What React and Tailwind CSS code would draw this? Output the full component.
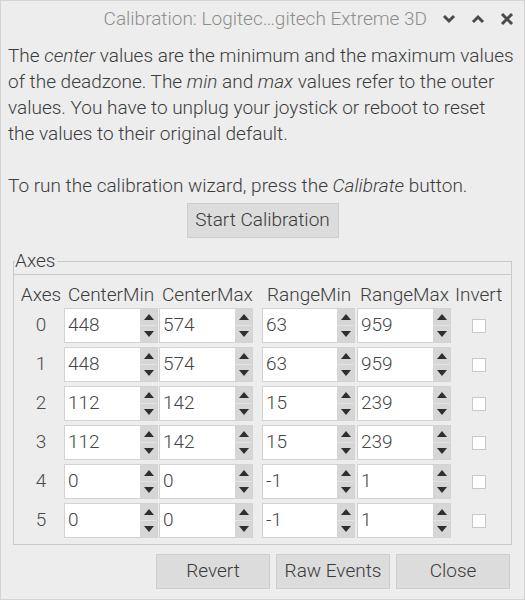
import React from "react";

const rows = [
  { axis: 0, cmin: 448, cmax: 574, rmin: 63, rmax: 959 },
  { axis: 1, cmin: 448, cmax: 574, rmin: 63, rmax: 959 },
  { axis: 2, cmin: 112, cmax: 142, rmin: 15, rmax: 239 },
  { axis: 3, cmin: 112, cmax: 142, rmin: 15, rmax: 239 },
  { axis: 4, cmin: 0, cmax: 0, rmin: -1, rmax: 1 },
  { axis: 5, cmin: 0, cmax: 0, rmin: -1, rmax: 1 },
];

const SpinBox = ({ value, width }) => (
  <div className={`flex h-[35px] border border-[#d3d3d3] bg-white ${width}`}>
    <div className="flex-1 flex items-center pl-[3px] text-[19px] text-[#454545]">
      {value}
    </div>
    <div className="flex w-[17px] flex-col bg-[#d6d6d6]">
      <div className="flex flex-1 items-center justify-center border-b border-[#e4e4e4]">
        <svg width="10" height="6" viewBox="0 0 10 6">
          <polygon points="0,6 5,0 10,6" fill="#2e2e2e" />
        </svg>
      </div>
      <div className="flex flex-1 items-center justify-center">
        <svg width="10" height="6" viewBox="0 0 10 6">
          <polygon points="0,0 10,0 5,6" fill="#2e2e2e" />
        </svg>
      </div>
    </div>
  </div>
);

const Button = ({ children, className }) => (
  <div
    className={`flex h-[35px] items-center justify-center border border-[#cdcdcd] bg-[#dcdcdc] text-[19px] text-[#3a3a3a] ${className}`}
  >
    {children}
  </div>
);

export default function App() {
  return (
    <div
      className="flex h-[600px] w-[525px] flex-col border border-[#d4d4d4] bg-[#ededed] font-light text-[#3c3c3c]"
      style={{ fontFamily: "Roboto, 'Noto Sans', sans-serif" }}
    >
      {/* title bar */}
      <div className="flex h-[36px] shrink-0 items-center justify-end pr-[10px]">
        <span className="mr-[15px] text-[19px] text-[#8d8d8d]">
          Calibration: Logitec…gitech Extreme 3D
        </span>
        <svg width="14" height="10" viewBox="0 0 14 10" className="mr-[15px]">
          <polyline points="2,2 7,7 12,2" fill="none" stroke="#4a4a4a" strokeWidth="3" />
        </svg>
        <svg width="14" height="10" viewBox="0 0 14 10" className="mr-[15px]">
          <polyline points="2,8 7,3 12,8" fill="none" stroke="#4a4a4a" strokeWidth="3" />
        </svg>
        <svg width="14" height="14" viewBox="0 0 14 14">
          <path d="M2 2 L12 12 M12 2 L2 12" fill="none" stroke="#4a4a4a" strokeWidth="3" />
        </svg>
      </div>

      {/* description */}
      <div className="whitespace-nowrap px-[7px] pt-[6px] text-[19px] leading-[26px]">
        <p>
          The <i>center</i> values are the minimum and the maximum values
          <br />
          of the deadzone. The <i>min</i> and <i>max</i> values refer to the outer
          <br />
          values. You have to unplug your joystick or reboot to reset
          <br />
          the values to their original default.
        </p>
        <p className="mt-[26px]">
          To run the calibration wizard, press the <i>Calibrate</i> button.
        </p>
      </div>

      <div className="mt-[4px] flex justify-center">
        <Button className="w-[152px]">Start Calibration</Button>
      </div>

      {/* Axes group */}
      <div className="relative mx-[12px] mt-[23px] border border-[#c9c9c9]">
        <span className="absolute -top-[13px] left-[1px] bg-[#ededed] pr-[2px] text-[19px] leading-[24px]">
          Axes
        </span>
        <div className="mt-[12px] border-t border-[#c9c9c9] pb-[6px]">
          <div className="mt-[7px] flex h-[26px] items-center pl-[4px] text-[19px]">
            <div className="w-[46px] text-center">Axes</div>
            <div className="w-[95px] pl-[4px]">CenterMin</div>
            <div className="w-[103px] pl-[3px]">CenterMax</div>
            <div className="w-[95px] pl-[5px]">RangeMin</div>
            <div className="w-[96px] pl-[3px]">RangeMax</div>
            <div className="pl-[2px]">Invert</div>
          </div>
          <div className="flex flex-col gap-[4px]">
            {rows.map((r) => (
              <div key={r.axis} className="flex items-center pl-[4px]">
                <div className="w-[46px] text-center text-[19px] text-[#4a4a4a]">{r.axis}</div>
                <SpinBox value={r.cmin} width="w-[94px]" />
                <div className="w-[1px]" />
                <SpinBox value={r.cmax} width="w-[94px]" />
                <div className="w-[9px]" />
                <SpinBox value={r.rmin} width="w-[93px]" />
                <div className="w-[2px]" />
                <SpinBox value={r.rmax} width="w-[94px]" />
                <div className="flex w-[56px] justify-center">
                  <div className="h-[14px] w-[14px] border border-[#c8c8c8] bg-white" />
                </div>
              </div>
            ))}
          </div>
        </div>
      </div>

      {/* bottom buttons */}
      <div className="mt-[9px] flex justify-end gap-[6px] pr-[14px]">
        <Button className="w-[114px]">Revert</Button>
        <Button className="w-[114px]">Raw Events</Button>
        <Button className="w-[114px]">Close</Button>
      </div>
    </div>
  );
}
